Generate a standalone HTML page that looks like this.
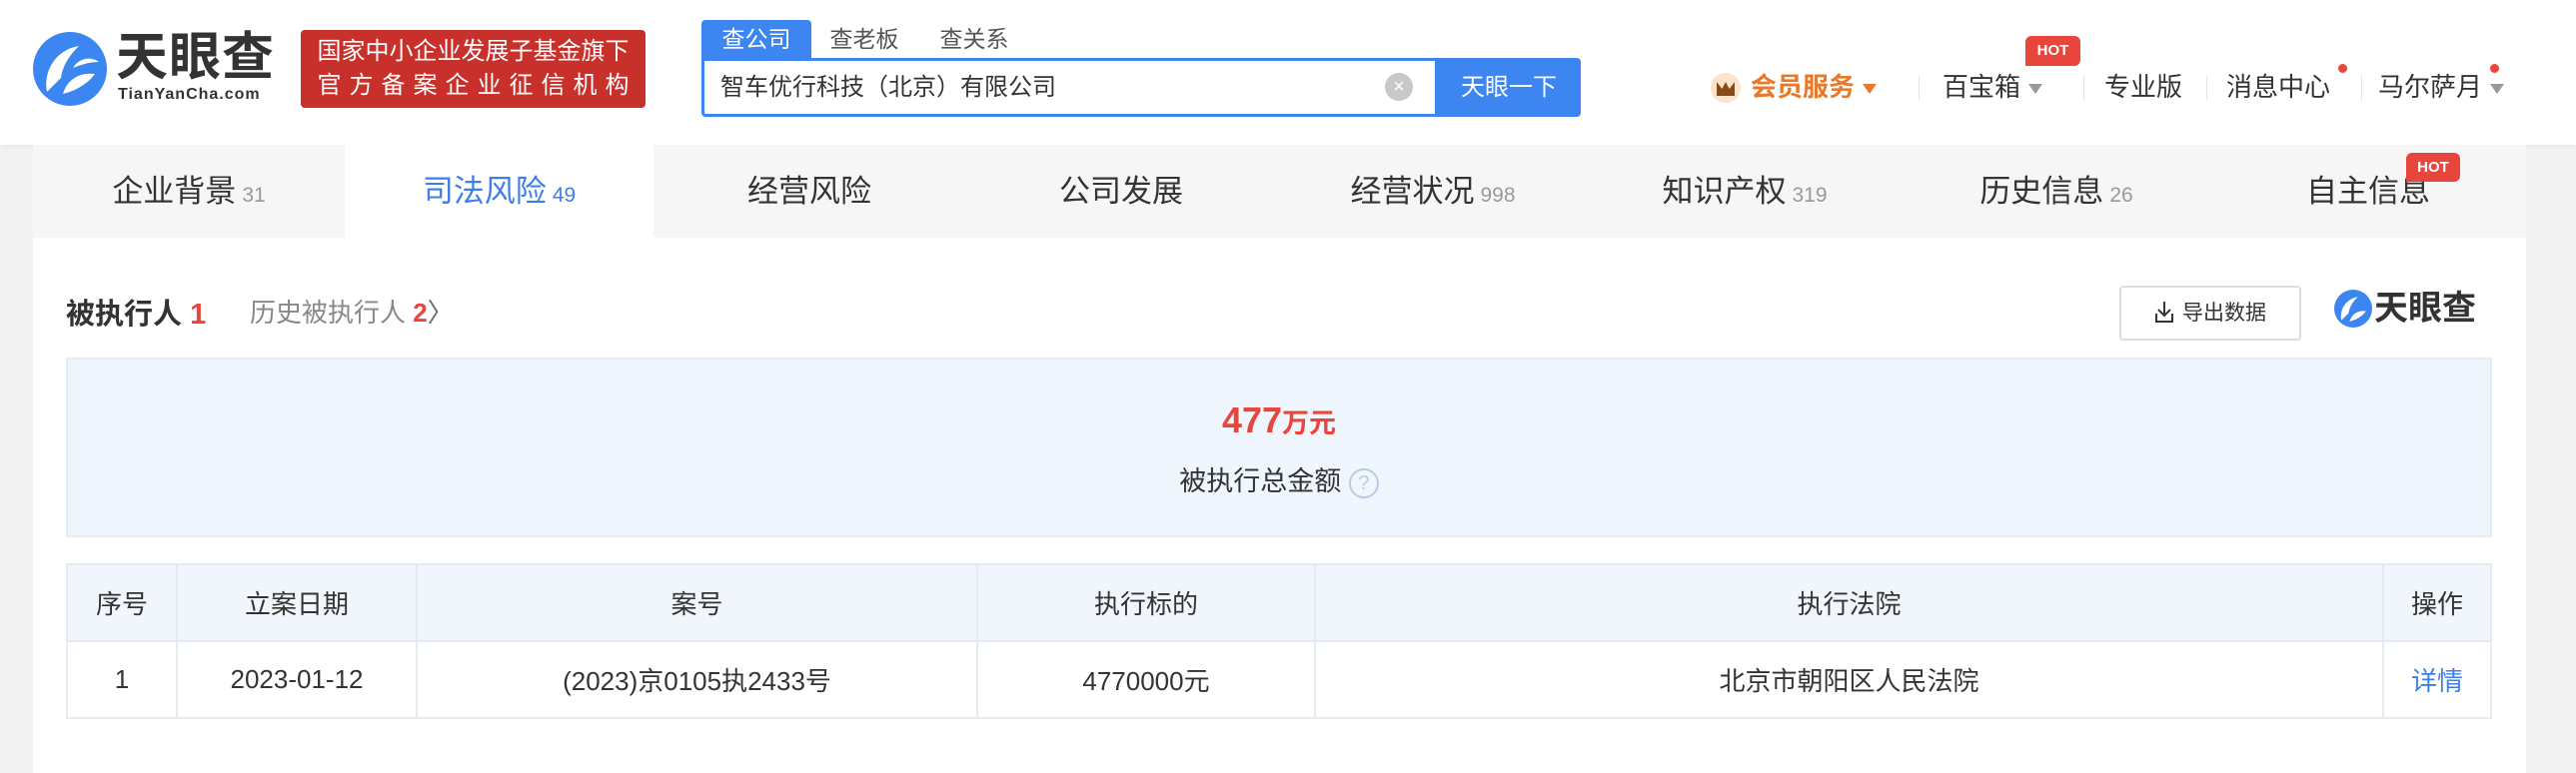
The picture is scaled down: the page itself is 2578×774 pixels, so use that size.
<!DOCTYPE html>
<html><head><meta charset="utf-8"><style>
*{margin:0;padding:0;box-sizing:border-box}
body{width:2578px;height:774px;background:#f3f3f3;font-family:"Liberation Sans","Noto Sans CJK SC",sans-serif;color:#333;position:relative;overflow:hidden}
.abs{position:absolute}
.hdr{left:0;top:0;width:2578px;height:145px;background:#fff;box-shadow:0 2px 6px rgba(0,0,0,.06)}
.badge{left:301px;top:30px;width:345px;height:78px;background:#c8302b;border-radius:4px;color:#fff;font-size:24px;line-height:34px;text-align:center;padding-top:5px;white-space:nowrap}
.stab{top:20px;height:38px;font-size:23px;line-height:38px;color:#555;text-align:center}
.nav{top:68px;font-size:26px;line-height:38px;color:#333}
.sep{top:75px;width:1px;height:26px;background:#e5e5e5}
.tri{display:inline-block;width:0;height:0;border-left:7px solid transparent;border-right:7px solid transparent;border-top:10px solid #999;vertical-align:middle;margin-left:8px}
.dot{width:9px;height:9px;border-radius:50%;background:#e8453c}
.hot{background:#e8453c;color:#fff;font-size:15px;font-weight:bold;text-align:center;border-radius:6px 6px 6px 0}
.tabs{left:33px;top:145px;width:2495px;height:93px;background:#f6f6f6}
.tab{top:145px;height:93px;line-height:93px;font-size:31px;color:#333;text-align:center}
.tab small{font-size:21px;color:#999;margin-left:6px}
.main{left:33px;top:238px;width:2495px;height:536px;background:#fff}
table{border-collapse:collapse;font-size:26px;color:#333}
td,th{border:2px solid #e6ebf2;text-align:center;font-weight:normal}
th{background:#f1f6fd;height:77px}
td{height:77px}
</style></head><body>
<div class="abs hdr"></div>
<svg class="abs" style="left:33px;top:32px" width="74" height="74" viewBox="0 0 74 74">
<circle cx="37" cy="37" r="37" fill="#3b86f0"/>
<path d="M14 60 C10 40 22 18 46 14 C38 22 30 32 28 46 Z" fill="#fff"/>
<path d="M30 62 C34 48 46 40 62 42 C56 50 46 58 30 62Z" fill="#fff"/>
<path d="M40 36 C46 26 58 24 66 30 C58 30 50 32 40 36Z" fill="#fff"/>
</svg>
<div class="abs" style="left:116px;top:28px;font-size:52px;font-weight:bold;color:#333;line-height:60px;letter-spacing:1px">天眼查</div>
<div class="abs" style="left:118px;top:86px;font-size:16px;font-weight:bold;color:#333;letter-spacing:1px">TianYanCha.com</div>
<div class="abs badge">国家中小企业发展子基金旗下<br><span style="letter-spacing:8px;margin-right:-8px">官方备案企业征信机构</span></div>
<div class="abs stab" style="left:702px;width:110px;background:#3d85f0;color:#fff;border-radius:4px 4px 0 0">查公司</div>
<div class="abs stab" style="left:815px;width:100px">查老板</div>
<div class="abs stab" style="left:925px;width:100px">查关系</div>
<div class="abs" style="left:702px;top:58px;width:737px;height:59px;border:3px solid #3d85f0;border-radius:0 0 0 4px;font-size:24px;line-height:53px;padding-left:16px;color:#333">智车优行科技（北京）有限公司</div>
<div class="abs" style="left:1386px;top:73px;width:28px;height:28px;border-radius:50%;background:#c8c8c8;color:#fff;font-size:20px;line-height:28px;text-align:center">×</div>
<div class="abs" style="left:1438px;top:58px;width:144px;height:59px;background:#3d85f0;color:#fff;font-size:24px;line-height:59px;text-align:center;border-radius:0 4px 4px 0">天眼一下</div>
<div class="abs" style="left:1712px;top:73px;width:30px;height:30px;border-radius:50%;background:#fbe3cc"></div>
<div class="abs" style="left:1718px;top:82px;width:18px;height:14px;background:#8a4b16;clip-path:polygon(0 0,30% 50%,50% 0,70% 50%,100% 0,100% 100%,0 100%)"></div>
<div class="abs nav" style="left:1752px;color:#e8782a;font-weight:bold">会员服务<span class="tri" style="border-top-color:#e8782a"></span></div>
<div class="abs sep" style="left:1920px"></div>
<div class="abs nav" style="left:1944px">百宝箱<span class="tri"></span></div>
<div class="abs hot" style="left:2027px;top:36px;width:55px;height:30px;line-height:30px">HOT</div>
<div class="abs sep" style="left:2085px"></div>
<div class="abs nav" style="left:2106px">专业版</div>
<div class="abs sep" style="left:2208px"></div>
<div class="abs nav" style="left:2228px">消息中心</div>
<div class="abs dot" style="left:2340px;top:64px"></div>
<div class="abs sep" style="left:2363px"></div>
<div class="abs nav" style="left:2380px">马尔萨月<span class="tri"></span></div>
<div class="abs dot" style="left:2492px;top:64px"></div>

<div class="abs tabs"></div>
<div class="abs" style="left:345px;top:145px;width:309px;height:93px;background:#fff"></div>
<div class="abs tab" style="left:33px;width:312px">企业背景<small>31</small></div>
<div class="abs tab" style="left:345px;width:309px;color:#3d7eea">司法风险<small style="color:#3d7eea">49</small></div>
<div class="abs tab" style="left:654px;width:312px">经营风险</div>
<div class="abs tab" style="left:966px;width:312px">公司发展</div>
<div class="abs tab" style="left:1278px;width:312px">经营状况<small>998</small></div>
<div class="abs tab" style="left:1590px;width:312px">知识产权<small>319</small></div>
<div class="abs tab" style="left:1902px;width:312px">历史信息<small>26</small></div>
<div class="abs tab" style="left:2214px;width:312px">自主信息</div>
<div class="abs hot" style="left:2408px;top:153px;width:54px;height:29px;line-height:29px">HOT</div>

<div class="abs main"></div>
<div class="abs" style="left:66px;top:291px;font-size:29px;font-weight:bold;color:#333">被执行人 <span style="color:#e8453c">1</span></div>
<div class="abs" style="left:250px;top:293px;font-size:26px;color:#888">历史被执行人 <b style="color:#e8453c">2</b><span style="color:#666">〉</span></div>
<div class="abs" style="left:2121px;top:286px;width:182px;height:55px;border:2px solid #ddd;border-radius:4px;font-size:21px;line-height:51px;text-align:center;color:#333"><svg width="20" height="24" viewBox="0 0 20 24" style="vertical-align:-4px;margin-right:8px"><path d="M10 2V16M4 10l6 6 6-6M2 14v8h16v-8" fill="none" stroke="#333" stroke-width="2"/></svg>导出数据</div>
<svg class="abs" style="left:2336px;top:290px" width="38" height="38" viewBox="0 0 74 74"><circle cx="37" cy="37" r="37" fill="#3b86f0"/><path d="M14 60 C10 40 22 18 46 14 C38 22 30 32 28 46 Z" fill="#fff"/><path d="M30 62 C34 48 46 40 62 42 C56 50 46 58 30 62Z" fill="#fff"/></svg>
<div class="abs" style="left:2376px;top:288px;font-size:34px;font-weight:bold;color:#333;line-height:42px">天眼查</div>

<div class="abs" style="left:66px;top:358px;width:2428px;height:180px;background:#f0f6fd;border:2px solid #e4ecf5"></div>
<div class="abs" style="left:66px;top:400px;width:2428px;text-align:center;font-size:36px;font-weight:bold;color:#e8453c">477<span style="font-size:27px">万元</span></div>
<div class="abs" style="left:66px;top:460px;width:2428px;text-align:center;font-size:27px;color:#333">被执行总金额 <span style="display:inline-block;width:30px;height:30px;border:2px solid #b8cbe0;border-radius:50%;font-size:20px;line-height:26px;color:#b8cbe0;vertical-align:middle">?</span></div>

<table class="abs" style="left:66px;top:564px;width:2428px">
<tr><th style="width:110px">序号</th><th style="width:240px">立案日期</th><th style="width:561px">案号</th><th style="width:338px">执行标的</th><th style="width:1069px">执行法院</th><th>操作</th></tr>
<tr><td>1</td><td>2023-01-12</td><td>(2023)京0105执2433号</td><td>4770000元</td><td>北京市朝阳区人民法院</td><td style="color:#3d7eea">详情</td></tr>
</table>
</body></html>
